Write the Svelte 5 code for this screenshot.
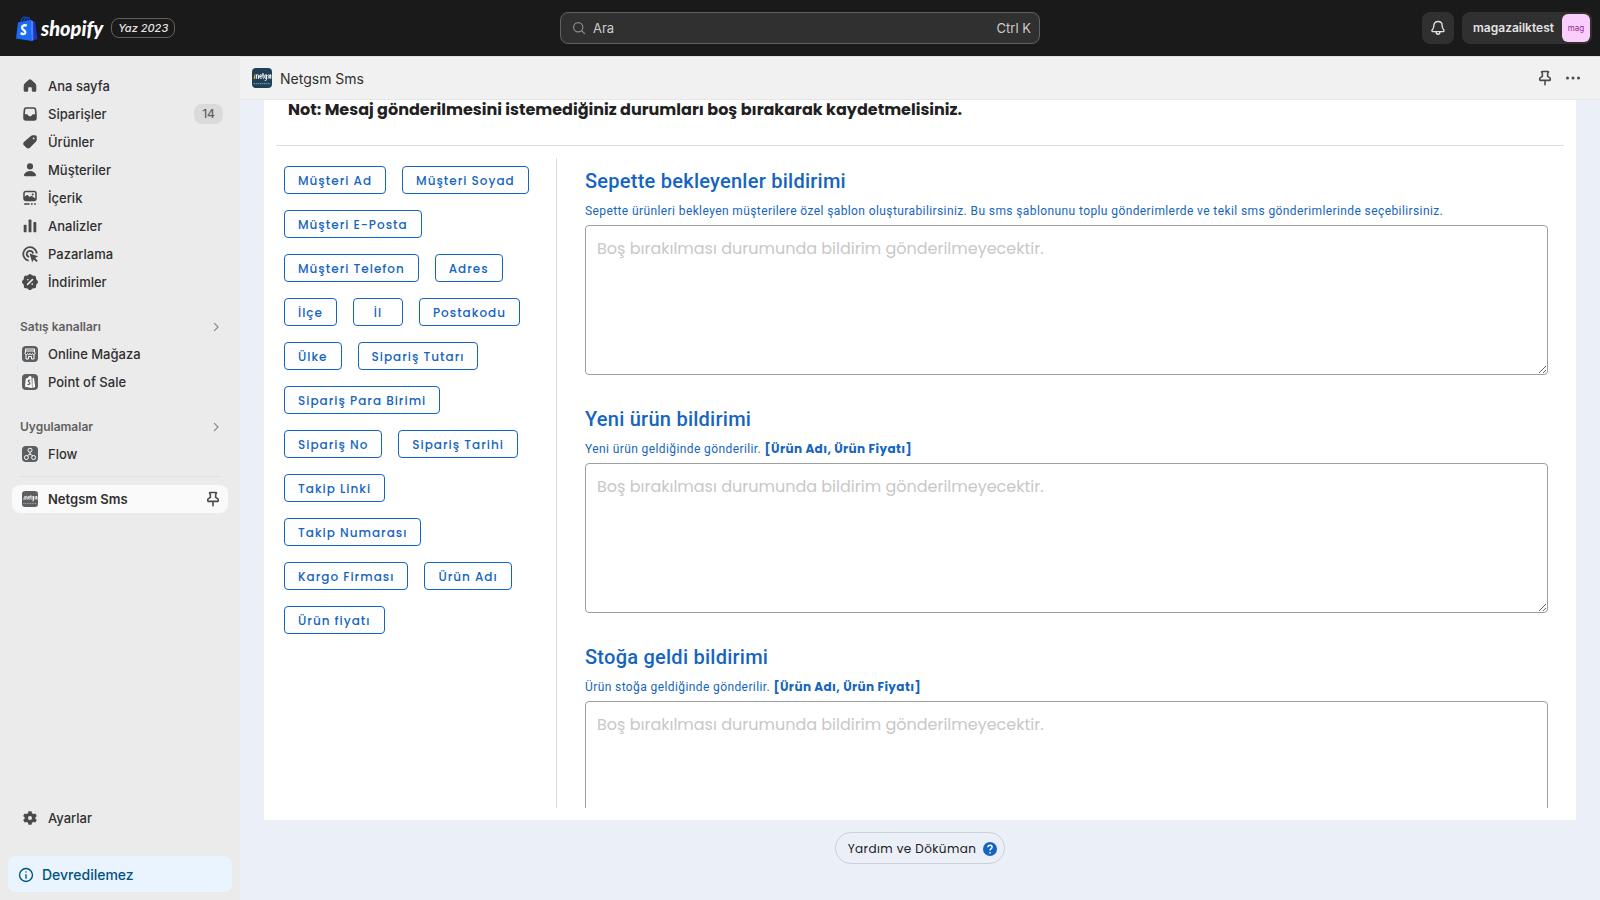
<script lang="ts">
  const mainNav = [
    { label: 'Ana sayfa', icon: 'home' },
    { label: 'Siparişler', icon: 'orders', badge: 14 },
    { label: 'Ürünler', icon: 'tag' },
    { label: 'Müşteriler', icon: 'person' },
    { label: 'İçerik', icon: 'content' },
    { label: 'Analizler', icon: 'chart' },
    { label: 'Pazarlama', icon: 'target' },
    { label: 'İndirimler', icon: 'discount' }
  ];

  const channels = [
    { label: 'Online Mağaza', icon: 'store' },
    { label: 'Point of Sale', icon: 'pos' }
  ];

  const apps = [{ label: 'Flow', icon: 'flow' }];

  const variables = [
    'Müşteri Ad', 'Müşteri Soyad', 'Müşteri E-Posta', 'Müşteri Telefon', 'Adres',
    'İlçe', 'İl', 'Postakodu', 'Ülke', 'Sipariş Tutarı', 'Sipariş Para Birimi',
    'Sipariş No', 'Sipariş Tarihi', 'Takip Linki', 'Takip Numarası',
    'Kargo Firması', 'Ürün Adı', 'Ürün fiyatı'
  ];

  let templates = $state([
    {
      id: 'cart',
      title: 'Sepette bekleyenler bildirimi',
      hint: 'Sepette ürünleri bekleyen müşterilere özel şablon oluşturabilirsiniz. Bu sms şablonunu toplu gönderimlerde ve tekil sms gönderimlerinde seçebilirsiniz.',
      fields: '',
      text: ''
    },
    {
      id: 'new-product',
      title: 'Yeni ürün bildirimi',
      hint: 'Yeni ürün geldiğinde gönderilir.',
      fields: '[Ürün Adı, Ürün Fiyatı]',
      text: ''
    },
    {
      id: 'in-stock',
      title: 'Stoğa geldi bildirimi',
      hint: 'Ürün stoğa geldiğinde gönderilir.',
      fields: '[Ürün Adı, Ürün Fiyatı]',
      text: ''
    }
  ]);

  let active = $state(0);

  function insertVariable(name: string) {
    templates[active].text += `[${name}]`;
  }
</script>

{#snippet icon(name: string)}
  <svg class="icon" viewBox="0 0 20 20" aria-hidden="true">
    {#if name === 'home'}
      <path d="M8.3 3.2a2.5 2.5 0 0 1 3.4 0l4 3.8c.8.8 1.3 1.8 1.3 2.900v4.800c0 1-.8 1.800-1.800 1.800h-1.400c-1 0-1.800-.8-1.800-1.800V12a.7.7 0 0 0-.7-.7H8.700a.7.7 0 0 0-.7.7v2.700c0 1-.8 1.800-1.800 1.800H4.800c-1 0-1.800-.8-1.800-1.800V9.900c0-1.100.5-2.100 1.300-2.900z" />
    {:else if name === 'orders'}
      <path fill-rule="evenodd" d="M5.600 2.500h8.800c1.300 0 2.400 1 2.600 2.300l.5 5.200v4.500a3 3 0 0 1-3 3h-9a3 3 0 0 1-3-3V10L3 4.800a2.600 2.600 0 0 1 2.600-2.300zm.1 1.800c-.5 0-.8.3-.9.800L4.300 10.200h1.900c.7 0 1.300.4 1.600 1l.3.600c.2.400.6.700 1.100.700h1.600c.5 0 .9-.3 1.100-.7l.3-.6c.3-.6.9-1 1.600-1h1.900l-.5-5.100c-.1-.5-.4-.8-.9-.8z" />
    {:else if name === 'tag'}
      <path fill-rule="evenodd" d="M11 3.300c.5-.5 1.200-.8 1.900-.8h2.600c1.100 0 2 .9 2 2v3c0 .8-.3 1.500-.8 2l-6.500 6.600a3.200 3.200 0 0 1-4.500 0L3.500 13.900a3 3 0 0 1 0-4.300zm3 3.700a1 1 0 1 0 0-2 1 1 0 0 0 0 2z" />
    {:else if name === 'person'}
      <circle cx="10" cy="6" r="3.400" />
      <path d="M3.400 15.100c1-2.300 3.500-4 6.600-4s5.600 1.700 6.600 4c.5 1.100-.4 1.900-1.400 1.900H4.800c-1 0-1.900-.8-1.400-1.900z" />
    {:else if name === 'content'}
      <path fill-rule="evenodd" d="M5.200 2h9.600C16.300 2 17.500 3.200 17.500 4.700v6.100c0 1.500-1.200 2.700-2.700 2.700H5.200a2.700 2.700 0 0 1-2.700-2.700V4.700C2.500 3.200 3.700 2 5.200 2zm0 1.700c-.6 0-1 .4-1 1v4l1.700-1.600c.6-.5 1.400-.5 2 0l1.800 1.800 1.100-.9c.6-.4 1.300-.4 1.800.1l3.200 2.400V4.700c0-.6-.4-1-1-1zm7.800 3.600a1.200 1.200 0 1 0 0-2.400 1.200 1.200 0 0 0 0 2.400z" />
      <path d="M3.500 15.700h6v1.700h-6zM11 15.700h2v1.700h-2zM14.500 15.700h2v1.700h-2z" />
    {:else if name === 'chart'}
      <rect x="3" y="8.500" width="3.200" height="8.500" rx="1" />
      <rect x="8.400" y="2.700" width="3.200" height="14.300" rx="1" />
      <rect x="13.800" y="5.500" width="3.200" height="11.500" rx="1" />
    {:else if name === 'target'}
      <path class="line" d="M17.500 9.500A7.500 7.500 0 1 0 8.500 17.300M13.400 9.500A3.500 3.500 0 1 0 9 13.300" />
      <path d="M9.500 9.500l9.500 3.100-3.300 1.900 3 2.900-1.600 1.600-2.900-3-1.800 3.200z" />
    {:else if name === 'discount'}
      <path fill-rule="evenodd" d="M10 1c1.500 0 1.900 1.400 2.900 1.800s2.300-.3 3.300.8.300 2.200.7 3.200S18.900 8.500 18.900 10s-1.600 2.200-2 3.200.3 2.200-.7 3.200-2.200.3-3.300.8S11.500 19 10 19s-1.900-1.400-2.900-1.800-2.300.3-3.300-.8-.3-2.200-.7-3.200-2-1.700-2-3.200 1.600-2.200 2-3.200-.3-2.200.7-3.200 2.200-.3 3.300-.8S8.500 1 10 1z" />
      <path class="knockout" d="M12.700 7.300l-5.400 5.400M7.500 7.500h.1M12.400 12.400h.1" />
    {:else if name === 'gear'}
      <path fill-rule="evenodd" d="M8.300 2.500h3.400l.5 2.200 1.600.9 2.100-.7 1.700 2.900-1.600 1.500v1.400l1.600 1.500-1.700 2.900-2.100-.7-1.600.9-.5 2.200H8.300l-.5-2.200-1.600-.9-2.100.7-1.700-2.900L4 10.700V9.300L2.400 7.800l1.700-2.900 2.100.7 1.600-.9zM10 12.200a2.200 2.200 0 1 0 0-4.400 2.200 2.200 0 0 0 0 4.400z" />
    {:else if name === 'pin'}
      <path class="pin" d="M6.400 1.800h7.200c.6 0 .8.500.6 1l-.9 1.500v3.700l2.400 1.500c1.100.8 1.300 3 .4 3.500H3.900c-.9-.5-.7-2.700.4-3.500l2.400-1.500V4.300l-.9-1.500c-.2-.5 0-1 .6-1zM10 13v5.500" />
    {:else if name === 'chevron'}
      <path class="thin" d="M8 5.500l4.500 4.500L8 14.500" />
    {:else if name === 'dots'}
      <circle cx="4.500" cy="10" r="1.500" />
      <circle cx="10" cy="10" r="1.500" />
      <circle cx="15.500" cy="10" r="1.500" />
    {:else if name === 'bell'}
      <path class="thin" d="M10 2.800c-2.900 0-4.600 2-4.600 4.400 0 2.700-.7 3.500-1.900 5-.6.800-.2 1.800.8 1.800h11.400c1 0 1.400-1 .8-1.800-1.200-1.500-1.900-2.300-1.900-5 0-2.400-1.700-4.400-4.600-4.400zM7.800 14.200c0 3.600 4.400 3.600 4.400 0" />
    {:else if name === 'search'}
      <circle class="thin" cx="9" cy="9" r="5.800" />
      <path class="thin" d="M13.400 13.400l3.600 3.600" />
    {:else if name === 'info'}
      <circle class="thin" cx="10" cy="10" r="7.200" />
      <path class="thin" d="M10 9.500v4M10 6.500v.3" />
    {/if}
  </svg>
{/snippet}

{#snippet appIcon(name: string)}
  <svg class="app-icon" viewBox="0 0 16 16" aria-hidden="true">
    <rect width="16" height="16" rx="4" fill="#5c5f62" />
    {#if name === 'store'}
      <path class="glyph" d="M3.500 3h9v2h-9zM3.500 5L3 7.500c.2 1.500 2.300 1.500 2.500 0 .3 1.500 2.200 1.500 2.500 0 .3 1.500 2.200 1.500 2.500 0 .2 1.500 2.300 1.500 2.500 0L12.500 5M4 9v4h2.500v-2.500h3V13H12V9" />
    {:else if name === 'pos'}
      <path d="M3.800 4.500 6 4c.3-1.300 1.200-2 2-2s1.300.6 1.500 1.300L10 14l-7-1.200z" fill="#fff" />
      <path d="M10.500 3.500l1.500.7 1.200 8.800-2.700.9z" fill="#fff" />
      <path d="M8.300 6.300C7 5.700 6 6.500 6.300 7.300c.3.800 1.700 1 1.600 2.200-.1 1.200-1.600 1.200-2.400.6" fill="none" stroke="#5c5f62" stroke-width="1.300" />
    {:else if name === 'flow'}
      <circle class="glyph" cx="8" cy="4.200" r="2" />
      <circle class="glyph" cx="4.400" cy="11.500" r="2" />
      <circle class="glyph" cx="11.600" cy="11.500" r="2" />
      <path class="glyph" d="M8 6.300v1.700L5.300 9.700M8 8l2.700 1.700" />
    {/if}
  </svg>
{/snippet}

{#snippet netgsm(fill: string, accent: string)}
  <svg class="brand" viewBox="0 0 20 20" aria-hidden="true">
    <rect width="20" height="20" rx="4" {fill} />
    <path d="M1.500 10.800h.9V7.500zM2.400 10.800V6.800l1-1v5z" fill={accent} />
    <path d="M4.600 10.800V6.500M4.600 7.500c.2-1.100 1.900-1.100 1.900.1v3.200M9.700 10.300H8.500c-.5 0-.7-.4-.7-1V7.600c0-1.200 1.800-1.200 1.800 0v.9H7.800M11 5v4.800c0 .5.300.7.900.6M10.300 6.900h1.500M14.400 6.900h-.9c-.6 0-.8.400-.8.900v1.700c0 .5.200.8.800.8h.9zM14.400 6.700v5c0 .7-.5 1-1.600.8M17 7c-1.300-.4-1.500.8-.7 1.400.9.500.9 2-.6 1.700M17.800 10.600V7c.7-.5 1.200.3 0 0h1v3.600" fill="none" stroke="#fff" stroke-width="1" />
    <path d="M1.500 15.700h17" stroke="#fff" stroke-width="1" stroke-dasharray="1.500 .6" opacity=".5" />
  </svg>
{/snippet}

{#snippet navItem(item: { label: string; icon: string; badge?: number }, boxed: boolean)}
  <li>
    <a class="nav-item" href="#{item.icon}">
      {#if boxed}
        {@render appIcon(item.icon)}
      {:else}
        {@render icon(item.icon)}
      {/if}
      <span class="nav-label">{item.label}</span>
      {#if item.badge}
        <span class="badge">{item.badge}</span>
      {/if}
    </a>
  </li>
{/snippet}

<div class="shell">
  <header class="topbar">
    <div class="top-left">
      <a class="logo" href="#home">
        <svg class="bag" viewBox="0 0 22 25" aria-hidden="true">
          <path d="M5 6C5.500 2.500 7.500 1 9 1c2 0 2.500 2.500 2.500 5M7.500 6c.5-3.500 2.500-4.500 4-4.500S14 3 14 5" fill="none" stroke="#0a4fd0" stroke-width="1.200" />
          <path d="M2 6.500 14.500 4 16 25 0 22.500z" fill="#1a6cf5" />
          <path d="M14.500 4l4.500 2 2.500 17L15.500 25z" fill="#1836c9" />
          <path d="M14.500 4l2.500 1.200.3 19L15.500 25z" fill="#4e83ff" />
          <path d="M10.800 9.800c-2.500-1.300-4.900-.2-4.700 2 .2 2.300 3.500 2.300 3.200 4.700-.3 2-2.900 1.900-4.600.5" fill="none" stroke="#fff" stroke-width="2.300" />
        </svg>
        <span class="wordmark">shopify</span>
      </a>
      <span class="edition">Yaz 2023</span>
    </div>
    <label class="search">
      {@render icon('search')}
      <input type="text" placeholder="Ara" aria-label="Ara" />
      <span>Ctrl K</span>
    </label>
    <div class="top-right">
      <button class="top-button bell" aria-label="Bildirimler">{@render icon('bell')}</button>
      <button class="top-button account">
        magazailktest
        <span class="avatar">mag</span>
      </button>
    </div>
  </header>

  <div class="body">
    <aside class="sidebar">
      <nav>
        <ul>
          {#each mainNav as item}
            {@render navItem(item, false)}
          {/each}
        </ul>
        <button class="section">Satış kanalları {@render icon('chevron')}</button>
        <ul>
          {#each channels as item}
            {@render navItem(item, true)}
          {/each}
        </ul>
        <button class="section">Uygulamalar {@render icon('chevron')}</button>
        <ul>
          {#each apps as item}
            {@render navItem(item, true)}
          {/each}
        </ul>
        <hr />
        <a class="nav-item current" href="#netgsm" aria-current="page">
          {@render netgsm('#5c5f62', '#ddd')}
          <span class="nav-label">Netgsm Sms</span>
          {@render icon('pin')}
        </a>
      </nav>
      <div class="sidebar-bottom">
        <a class="nav-item" href="#settings">
          {@render icon('gear')}
          <span class="nav-label">Ayarlar</span>
        </a>
        <button class="notice">{@render icon('info')} Devredilemez</button>
      </div>
    </aside>

    <main>
      <header class="app-header">
        {@render netgsm('#1f4058', '#f0b429')}
        <h1>Netgsm Sms</h1>
        <button class="plain" aria-label="Sabitle">{@render icon('pin')}</button>
        <button class="plain" aria-label="Diğer">{@render icon('dots')}</button>
      </header>

      <div class="app-body">
        <section class="card">
          <p class="note">Not: Mesaj gönderilmesini istemediğiniz durumları boş bırakarak kaydetmelisiniz.</p>
          <div class="columns">
            <div class="variables">
              {#each variables as name}
                <button class="variable" onclick={() => insertVariable(name)}>{name}</button>
              {/each}
            </div>
            <div class="templates">
              {#each templates as template, i}
                <div class="template">
                  <h2><label for={template.id}>{template.title}</label></h2>
                  <p>{template.hint} {#if template.fields}<b>{template.fields}</b>{/if}</p>
                  <textarea
                    id={template.id}
                    placeholder="Boş bırakılması durumunda bildirim gönderilmeyecektir."
                    bind:value={template.text}
                    onfocus={() => (active = i)}
                  ></textarea>
                </div>
              {/each}
            </div>
          </div>
        </section>
        <button class="help">
          Yardım ve Döküman
          <svg class="question" viewBox="0 0 14 14" aria-hidden="true">
            <circle cx="7" cy="7" r="7" fill="#1565c0" />
            <path d="M4.900 5.300c0-2.800 4.200-2.700 4.200-.1C9.100 6.700 7 6.900 7 8.500M7 10v1.400" fill="none" stroke="#fff" stroke-width="1.400" />
          </svg>
        </button>
      </div>
    </main>
  </div>
</div>

<style>
  :global(body) {
    margin: 0;
  }

  .shell {
    display: flex;
    flex-direction: column;
    height: 100vh;
    overflow: hidden;
    background: #ebebeb;
    color: #303030;
    font: 13px/20px Inter, "Liberation Sans", sans-serif;
  }

  .shell :global(*) {
    box-sizing: border-box;
  }

  button,
  input,
  textarea {
    font: inherit;
    color: inherit;
  }

  button {
    border: none;
    background: none;
    padding: 0;
    cursor: pointer;
  }

  a {
    color: inherit;
    text-decoration: none;
  }

  ul {
    list-style: none;
    margin: 0;
    padding: 0;
  }

  .icon {
    flex: none;
    width: 18px;
    height: 18px;
    fill: currentColor;
  }

  .icon .line {
    fill: none;
    stroke: currentColor;
    stroke-width: 2;
  }

  .icon .thin {
    fill: none;
    stroke: currentColor;
    stroke-width: 1.5;
    stroke-linecap: round;
    stroke-linejoin: round;
  }

  .icon .pin {
    fill: none;
    stroke: currentColor;
    stroke-width: 2;
    stroke-linecap: round;
    stroke-linejoin: round;
  }

  .icon .knockout {
    fill: none;
    stroke: #ebebeb;
    stroke-width: 1.8;
    stroke-linecap: round;
  }

  .app-icon {
    flex: none;
    width: 16px;
    height: 16px;
  }

  .app-icon .glyph {
    fill: none;
    stroke: #fff;
  }

  .brand {
    flex: none;
    width: 20px;
    height: 20px;
  }

  .topbar {
    flex: none;
    display: grid;
    grid-template-columns: 1fr minmax(200px, 480px) 1fr;
    align-items: center;
    height: 56px;
    background: #1a1a1a;
    color: #e3e3e3;
  }

  .top-left {
    display: flex;
    align-items: center;
    gap: 8px;
    padding-left: 16px;
  }

  .logo {
    display: flex;
    align-items: center;
    gap: 3px;
  }

  .bag {
    width: 22px;
    height: 25px;
  }

  .wordmark {
    color: #fff;
    font: italic 900 20px/24px Lato, sans-serif;
  }

  .edition {
    padding: 0 6px;
    border: 1px solid #616161;
    border-radius: 8px;
    font-size: 11px;
    line-height: 18px;
    font-style: italic;
    font-weight: 500;
  }

  .search {
    display: flex;
    align-items: center;
    gap: 6px;
    height: 32px;
    padding: 0 8px 0 10px;
    border: 1px solid #616161;
    border-radius: 8px;
    background: #303030;
    color: #ccc;
    cursor: text;
  }

  .search :global(.icon) {
    width: 16px;
    height: 16px;
    color: #8a8a8a;
  }

  .search input {
    flex: 1;
    min-width: 0;
    padding: 0;
    border: none;
    outline: none;
    background: none;
  }

  .search input::placeholder {
    color: #ccc;
    opacity: 1;
  }

  .top-right {
    display: flex;
    justify-content: flex-end;
    gap: 8px;
    padding-right: 8px;
  }

  .top-button {
    display: flex;
    align-items: center;
    justify-content: center;
    height: 32px;
    border-radius: 8px;
    background: #303030;
  }

  .bell {
    width: 32px;
  }

  .account {
    gap: 8px;
    padding: 0 2px 0 11px;
    font-size: 12px;
    font-weight: 600;
  }

  .avatar {
    width: 28px;
    height: 28px;
    border-radius: 6px;
    background: #fbcdfb;
    color: #8f2f91;
    font-size: 8px;
    line-height: 28px;
    font-weight: 400;
  }

  .body {
    flex: 1;
    display: flex;
    min-height: 0;
  }

  .sidebar {
    flex: none;
    display: flex;
    flex-direction: column;
    justify-content: space-between;
    width: 240px;
    padding: 16px 8px 8px;
  }

  nav,
  .sidebar-bottom {
    padding: 0 4px;
  }

  .nav-item {
    display: flex;
    align-items: center;
    gap: 9px;
    height: 28px;
    padding: 0 5px 0 9px;
    border-radius: 8px;
    font-weight: 450;
  }

  .nav-item .icon {
    color: #4a4a4a;
  }

  .nav-item .app-icon,
  .nav-item .brand {
    width: 16px;
    height: 16px;
    margin: 0 1px;
  }

  .nav-item .nav-label + .icon {
    width: 16px;
    height: 16px;
    margin-right: 2px;
  }

  .nav-label {
    flex: 1;
  }

  .badge {
    padding: 0 8px;
    border-radius: 8px;
    background: #dadada;
    color: #616161;
    font-size: 12px;
    font-weight: 500;
  }

  .section {
    display: flex;
    align-items: center;
    justify-content: space-between;
    width: 100%;
    height: 28px;
    margin-top: 16px;
    padding: 2px 4px 0 8px;
    color: #616161;
    font-size: 12px;
    font-weight: 600;
  }

  .section .icon {
    width: 16px;
    height: 16px;
    color: #8a8a8a;
  }

  hr {
    margin: 8px;
    border: none;
    border-top: 1px solid #e0e0e0;
  }

  .current {
    background: #fafafa;
    font-weight: 600;
  }

  .notice {
    display: flex;
    align-items: center;
    gap: 7px;
    width: calc(100% + 8px);
    height: 36px;
    margin: 24px -4px 0;
    padding: 1px 9px 0;
    border-radius: 8px;
    background: #eaf4ff;
    color: #00527c;
    font-size: 14px;
    font-weight: 500;
  }

  main {
    flex: 1;
    display: flex;
    flex-direction: column;
    min-width: 0;
    background: #eaeff8;
  }

  .app-header {
    flex: none;
    display: flex;
    align-items: center;
    gap: 8px;
    height: 44px;
    padding: 0 17px 0 12px;
    border-top: 1px solid #e3e3e3;
    border-bottom: 1px solid #e6e6e6;
    background: #f1f1f1;
  }

  h1 {
    flex: 1;
    margin: 0;
    padding-top: 1px;
    font-size: 14px;
    font-weight: 400;
  }

  .plain {
    display: flex;
    justify-content: center;
    width: 20px;
    color: #4a4a4a;
  }

  .plain .icon {
    width: 16px;
    height: 16px;
  }

  .plain:last-child .icon {
    width: 20px;
    height: 20px;
  }

  .app-body {
    flex: 1;
    display: flex;
    flex-direction: column;
    align-items: center;
    min-height: 0;
    padding: 0 24px 36px;
    font-family: Poppins, Inter, sans-serif;
  }

  .card {
    flex: 1;
    display: flex;
    flex-direction: column;
    align-self: stretch;
    min-height: 0;
    margin-bottom: 12px;
    padding: 0 12px 12px;
    background: #fff;
  }

  .note {
    margin: 0;
    padding: 0 12px 25px;
    border-bottom: 1px solid #dcdcdc;
    color: #212121;
    font-size: 16px;
    font-weight: 700;
  }

  .columns {
    flex: 1;
    display: flex;
    min-height: 0;
    margin-top: 12px;
  }

  .variables {
    flex: none;
    display: flex;
    flex-wrap: wrap;
    align-content: flex-start;
    gap: 16px;
    width: 281px;
    padding: 8px 20px 8px 8px;
    border-right: 1px solid #dcdcdc;
  }

  .variable {
    height: 28px;
    min-width: 50px;
    padding: 1px 13px 0;
    border: 1px solid #1565c0;
    border-radius: 4px;
    color: #1565c0;
    font-size: 12px;
    font-weight: 500;
    letter-spacing: 1px;
  }

  .templates {
    flex: 1;
    min-width: 0;
    overflow: hidden;
    padding: 7px 16px 0 28px;
    color: #1565c0;
  }

  .template {
    margin-bottom: 28px;
    font-family: Roboto, sans-serif;
  }

  h2 {
    margin: 0;
    font-size: 20px;
    line-height: 32px;
    font-weight: 500;
    letter-spacing: 0.0125em;
  }

  .template p {
    margin: 4px 0;
    font-size: 12px;
    letter-spacing: 0.0333em;
  }

  .template b {
    font-family: Poppins, Inter, sans-serif;
    font-weight: 700;
  }

  textarea {
    display: block;
    width: 100%;
    height: 150px;
    padding: 11px;
    border: 1px solid #9e9e9e;
    border-radius: 4px;
    background: #fff;
    color: #212121;
    font-family: Poppins, Inter, sans-serif;
    font-size: 16px;
    line-height: 24px;
    resize: vertical;
  }

  textarea::placeholder {
    color: #c8c8c8;
    opacity: 1;
  }

  .help {
    display: flex;
    align-items: center;
    gap: 7px;
    height: 32px;
    padding: 1px 7px 0 12px;
    border: 1px solid #ccd0d8;
    border-radius: 16px;
    color: #212121;
    font-size: 12px;
    letter-spacing: 0.0333em;
  }

  .question {
    width: 14px;
    height: 14px;
  }
</style>
